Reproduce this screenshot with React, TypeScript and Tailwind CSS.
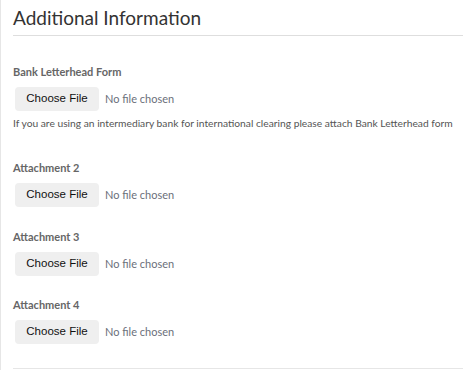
import React from 'react';

// ── File picker row ───────────────────────────────────────────────────────────

function FilePicker() {
  return (
    <div className="flex items-center">
      <span
        className="flex h-[24px] w-[84px] items-center justify-center rounded-[4px] bg-[#efefef] text-[11.5px] text-[#111]"
        style={{ fontFamily: '"Liberation Sans", Arial, sans-serif' }}
      >
        Choose File
      </span>
      <span className="ml-[6px] text-[11px] text-[#6b6f7a]">No file chosen</span>
    </div>
  );
}

function Field({ label, help, className = '' }: { label: string; help?: string; className?: string }) {
  return (
    <div className={className}>
      <p className="mb-[8px] text-[11px] font-bold leading-[14px] text-[#666]">{label}</p>
      <div className="pl-[2px]">
        <FilePicker />
      </div>
      {help && <p className="mt-[5px] text-[10.25px] leading-[14px] text-[#555]">{help}</p>}
    </div>
  );
}

export default function App() {
  return (
    <div
      className="h-[370px] w-[463px] overflow-hidden border-l border-[#e6e6e6] bg-white"
      style={{ fontFamily: 'Lato, "Open Sans", sans-serif' }}
    >
      <div className="pl-[12px]">
        <h2 className="pt-[6px] pb-[6px] text-[19px] leading-[23px] text-[#333] border-b border-[#dedede]">
          Additional Information
        </h2>
        <Field
          className="mt-[29px]"
          label="Bank Letterhead Form"
          help="If you are using an intermediary bank for international clearing please attach Bank Letterhead form"
        />
        <Field className="mt-[31px]" label="Attachment 2" />
        <Field className="mt-[23px]" label="Attachment 3" />
        <Field className="mt-[22px]" label="Attachment 4" />
        <div className="mt-[24px] border-b border-[#e6e6e6]" />
      </div>
    </div>
  );
}
